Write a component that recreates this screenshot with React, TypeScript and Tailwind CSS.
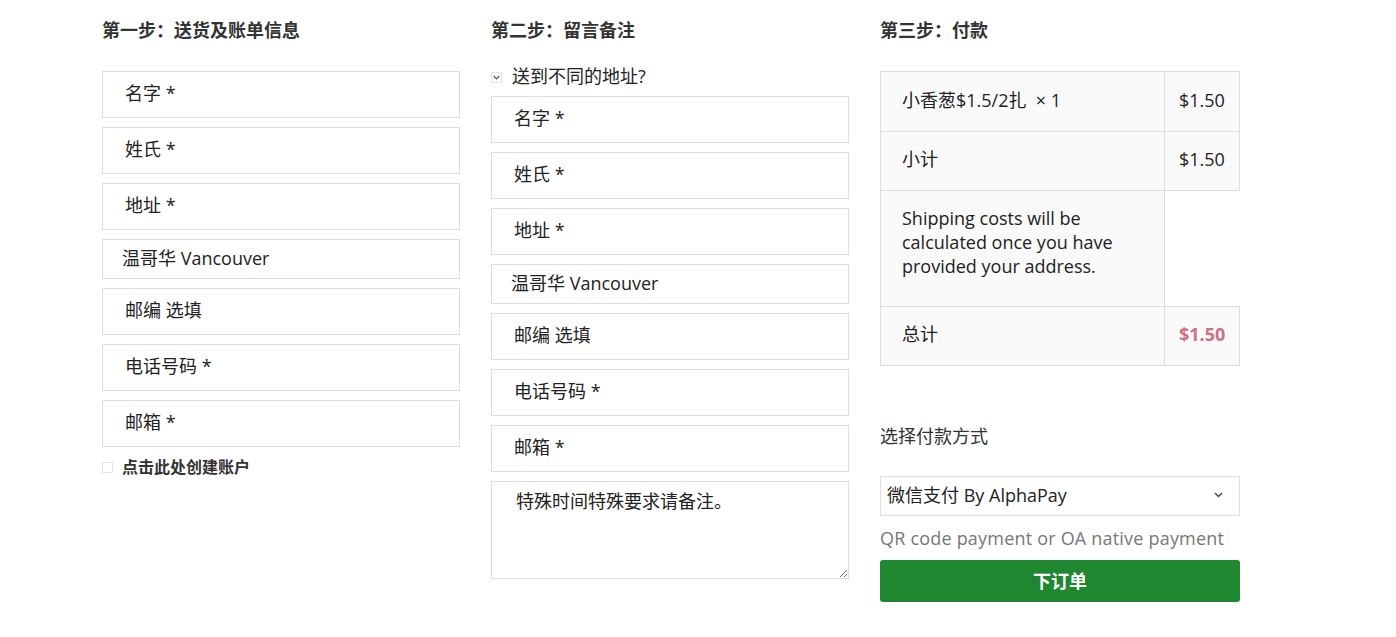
import React from "react";

const font = { fontFamily: '"Open Sans", "Noto Sans CJK SC", sans-serif' };

function Field({ label }: { label: string }) {
  return (
    <input
      placeholder={label}
      className="block w-full h-[47px] mb-[9px] border border-[#dddddd] bg-white pl-[22px] pb-[3px] text-[18px] text-[#222] placeholder:text-[#222] outline-none"
    />
  );
}

function CitySelect() {
  return (
    <div className="w-full h-[40px] mb-[9px] border border-[#dddddd] bg-white pl-[19px] pb-[2px] flex items-center text-[18px] text-[#222]">
      温哥华 Vancouver
    </div>
  );
}

function Heading({ children }: { children: React.ReactNode }) {
  return <h3 className="text-[18px] leading-6 font-bold text-[#333]">{children}</h3>;
}

export default function App() {
  return (
    <div style={font} className="min-h-[637px] bg-white pt-[18px] pl-[102px]">
      <div className="grid grid-cols-[358px_358px_360px] gap-x-[31px] items-start">
        {/* step 1 */}
        <div>
          <Heading>第一步：送货及账单信息</Heading>
          <div className="mt-[29px]">
            <Field label="名字 *" />
            <Field label="姓氏 *" />
            <Field label="地址 *" />
            <CitySelect />
            <Field label="邮编 选填" />
            <Field label="电话号码 *" />
            <Field label="邮箱 *" />
          </div>
          <label className="flex items-center gap-[9px] mt-[3px] h-[22px]">
            <span className="w-[11px] h-[11px] border border-[#e4e4e4] bg-white" />
            <span className="text-[16px] font-bold text-[#333]">点击此处创建账户</span>
          </label>
        </div>

        {/* step 2 */}
        <div>
          <Heading>第二步：留言备注</Heading>
          <label className="mt-[25px] h-[20px] flex items-center gap-[10px]">
            <span className="w-[11px] h-[11px] border border-[#e4e4e4] bg-white flex items-center justify-center">
              <svg width="7" height="5" viewBox="0 0 7 5" fill="none">
                <path d="M0.8 1 L3.5 3.8 L6.2 1" stroke="#555" strokeWidth="1.2" />
              </svg>
            </span>
            <span className="text-[18px] text-[#222] pb-[2px]">送到不同的地址?</span>
          </label>
          <div className="mt-[9px]">
            <Field label="名字 *" />
            <Field label="姓氏 *" />
            <Field label="地址 *" />
            <CitySelect />
            <Field label="邮编 选填" />
            <Field label="电话号码 *" />
            <Field label="邮箱 *" />
            <textarea
              placeholder="特殊时间特殊要求请备注。"
              className="block w-full h-[98px] border border-[#dddddd] bg-white pl-[24px] pt-[6px] text-[18px] text-[#222] placeholder:text-[#222] outline-none"
            />
          </div>
        </div>

        {/* step 3 */}
        <div>
          <Heading>第三步：付款</Heading>
          <table className="mt-[29px] w-full border-collapse text-[18px] text-[#222]">
            <tbody>
              <tr className="h-[60px]">
                <td className="w-[284px] bg-[#fafafa] border border-[#dddddd] pl-[21px] pb-[3px]">
                  小香葱$1.5/2扎&nbsp;&nbsp;× 1
                </td>
                <td className="bg-[#fafafa] border border-[#dddddd] pl-[14px] pb-[3px]">$1.50</td>
              </tr>
              <tr className="h-[59px]">
                <td className="bg-[#fafafa] border border-[#dddddd] pl-[21px] pb-[3px]">小计</td>
                <td className="bg-[#fafafa] border border-[#dddddd] pl-[14px] pb-[3px]">$1.50</td>
              </tr>
              <tr className="h-[116px]">
                <td className="bg-[#fafafa] border border-[#dddddd] pl-[21px] pr-[20px] pb-[14px] leading-6">
                  Shipping costs will be calculated once you have provided your address.
                </td>
                <td className="bg-white border-t border-b border-l border-[#dddddd]" />
              </tr>
              <tr className="h-[59px]">
                <td className="bg-[#fafafa] border border-[#dddddd] pl-[21px] pb-[3px]">总计</td>
                <td className="bg-[#fafafa] border border-[#dddddd] pl-[14px] pb-[3px] font-bold text-[#d16f7f]">
                  $1.50
                </td>
              </tr>
            </tbody>
          </table>

          <div className="mt-[58px] text-[18px] leading-6 text-[#333]">选择付款方式</div>

          <div className="mt-[28px] h-[40px] border border-[#dddddd] bg-white flex items-center justify-between pl-[6px] pr-[16px] pb-[2px] text-[18px] text-[#222]">
            <span>微信支付 By AlphaPay</span>
            <svg width="9" height="6" viewBox="0 0 9 6" fill="none">
              <path d="M1 1 L4.5 4.5 L8 1" stroke="#444" strokeWidth="1.4" />
            </svg>
          </div>

          <p className="mt-[10px] text-[18px] leading-6 tracking-[0.2px] text-[#777]">QR code payment or OA native payment</p>

          <button className="mt-[10px] w-full h-[42px] rounded-[3px] bg-[#1e872f] text-white text-[18px] font-bold">
            下订单
          </button>
        </div>
      </div>
    </div>
  );
}
